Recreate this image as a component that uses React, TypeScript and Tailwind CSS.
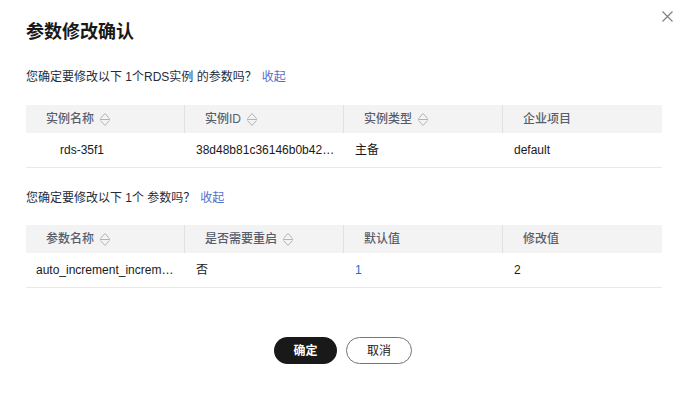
import React from "react";

const font = "font-['Liberation_Sans','Noto_Sans_CJK_SC',sans-serif]";

function SortIcon() {
  return (
    <svg width="12" height="15" viewBox="0 0 12 15" className="ml-[5px] shrink-0" fill="none">
      <path d="M1.5 6.5 L6 1.5 L10.5 6.5" stroke="#b3b3b3" strokeWidth="1" />
      <path d="M1 7.5 H11" stroke="#b3b3b3" strokeWidth="1" />
      <path d="M1.5 8.5 L6 13.5 L10.5 8.5" stroke="#b3b3b3" strokeWidth="1" />
    </svg>
  );
}

type Col = { label: string; sortable?: boolean };

function HeaderCell({ col, last }: { col: Col; last?: boolean }) {
  return (
    <div className="relative flex h-[28px] items-center pl-[20px] text-[12px] font-medium text-[#575d6c]">
      <span>{col.label}</span>
      {col.sortable ? <SortIcon /> : null}
      {!last ? <span className="absolute right-0 top-0 h-full w-px bg-[#dfe1e6]" /> : null}
    </div>
  );
}

function Table({ cols, cells, firstPad }: { cols: Col[]; cells: React.ReactNode[]; firstPad: string }) {
  return (
    <div className="w-[636px]">
      <div className="grid grid-cols-4 bg-[#f3f3f3]">
        {cols.map((c, i) => (
          <HeaderCell key={c.label} col={c} last={i === cols.length - 1} />
        ))}
      </div>
      <div className="grid h-[35px] grid-cols-4 items-center border-b border-[#e9e9e9] text-[12px] text-[#191919]">
        {cells.map((cell, i) => (
          <div key={i} className={i === 0 ? firstPad : "pl-[11px]"}>
            {cell}
          </div>
        ))}
      </div>
    </div>
  );
}

export default function App() {
  return (
    <div className={`relative h-[393px] w-[688px] overflow-hidden bg-white px-[26px] pt-[20px] ${font}`}>
      <button type="button" className="absolute right-[14px] top-[10px] p-[1px]">
        <svg width="11" height="11" viewBox="0 0 11 11">
          <path d="M0.5 0.5 L10.5 10.5 M10.5 0.5 L0.5 10.5" stroke="#808080" strokeWidth="1.2" />
        </svg>
      </button>

      <h1 className="h-[24px] text-[18px] font-bold leading-[24px] text-[#191919]">参数修改确认</h1>

      <p className="mt-[23px] h-[20px] text-[12px] leading-[20px] text-[#252b3a]">
        您确定要修改以下 1个RDS实例 的参数吗？
        <span className="ml-[5px] text-[#526ecc]">收起</span>
      </p>

      <div className="mt-[18px]">
        <Table
          firstPad="pl-[34px]"
          cols={[
            { label: "实例名称", sortable: true },
            { label: "实例ID", sortable: true },
            { label: "实例类型", sortable: true },
            { label: "企业项目" },
          ]}
          cells={[
            "rds-35f1",
            <span className="block w-[140px] truncate">38d48b81c36146b0b42e7c1f</span>,
            "主备",
            "default",
          ]}
        />
      </div>

      <p className="mt-[20px] h-[20px] text-[12px] leading-[20px] text-[#252b3a]">
        您确定要修改以下 1个 参数吗？
        <span className="ml-[5px] text-[#526ecc]">收起</span>
      </p>

      <div className="mt-[17px]">
        <Table
          firstPad="pl-[10px]"
          cols={[
            { label: "参数名称", sortable: true },
            { label: "是否需要重启", sortable: true },
            { label: "默认值" },
            { label: "修改值" },
          ]}
          cells={[
            <span className="block w-[140px] truncate">auto_increment_increment</span>,
            "否",
            <span className="text-[#0b76c5]">1</span>,
            "2",
          ]}
        />
      </div>

      <div className="mt-[49px] flex justify-center gap-[9px] pr-[2px]">
        <button
          type="button"
          className="h-[27px] w-[63px] rounded-full bg-[#191919] text-[12px] font-bold text-white"
        >
          确定
        </button>
        <button
          type="button"
          className="h-[27px] w-[66px] rounded-full border border-[#757575] bg-white text-[12px] text-[#191919]"
        >
          取消
        </button>
      </div>
    </div>
  );
}
